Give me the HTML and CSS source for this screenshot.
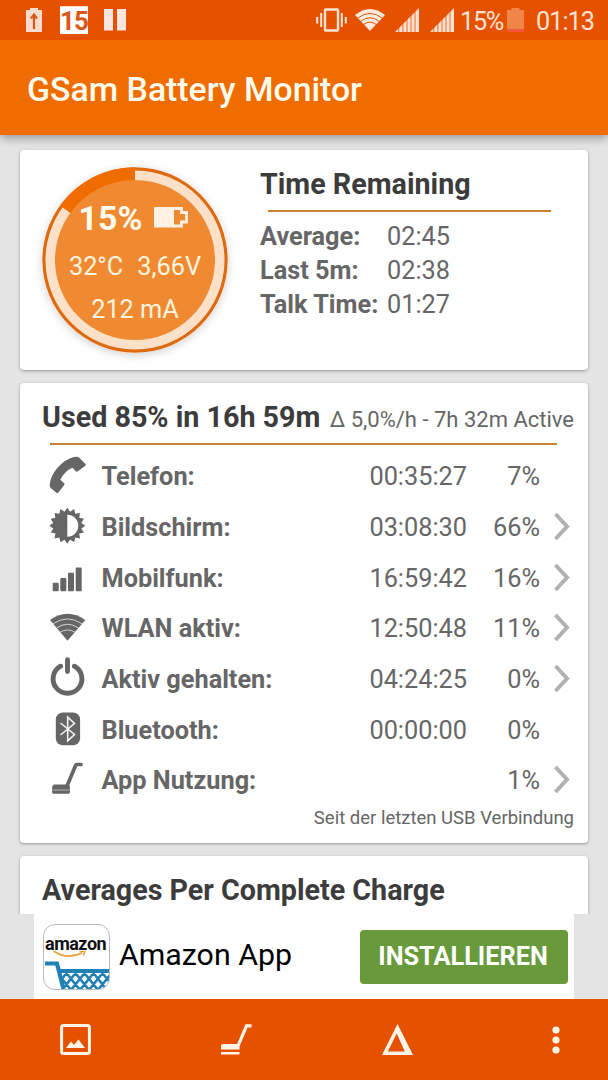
FILE: index.html
```html
<!DOCTYPE html>
<html lang="de">
<head>
<meta charset="utf-8">
<title>GSam Battery Monitor</title>
<link rel="stylesheet" href="styles.css">
</head>
<body>
<div class="screen">
  <header class="status">
    <div class="status-left">
      <svg width="16" height="24" viewBox="0 0 16 24"><path fill="#f9dccb" d="M4 0h8v2h4v22H0V2h4z"/><path d="M8 21V8M5 10.500l3-4 3 4" fill="none" stroke="#d9581a" stroke-width="2.200"/></svg>
      <span class="calendar">15</span>
      <svg width="22" height="22" viewBox="0 0 22 22"><path fill="#f8e5dd" d="M0 0h9v21.500H0zM13 0h9v21.500h-9z"/></svg>
    </div>
    <div class="status-right">
      <svg width="31" height="24" viewBox="0 0 31 24"><g fill="none" stroke="#fce5d8" stroke-width="2"><rect x="9" y="1.500" width="13" height="21" rx="1" stroke-width="2.400"/><path d="M5.200 5v14M25.800 5v14M1.200 9v6.500M29.800 9v6.500"/></g></svg>
      <svg class="st-wifi" width="30" height="24" viewBox="0 0 30 24"><path fill="#fdeade" d="M0 7Q15-5 30 7L15 23z"/><path d="M2.500 10.300Q15 .5 27.500 10.300M5.500 13.500Q15 6 24.500 13.500M8.500 16.700Q15 11.500 21.500 16.700" fill="none" stroke="#e65100" stroke-width="1"/></svg>
      <svg class="st-sig" width="24" height="24" viewBox="0 0 24 24"><path fill="#fce0d0" d="M0 24L24 0v24z"/><path d="M3.800 18v6M7.900 14v10M12 10v14M16 6v18M20 2v22" stroke="#e65100" stroke-width=".8"/></svg>
      <svg class="st-sig" width="24" height="24" viewBox="0 0 24 24"><path fill="#fce0d0" d="M0 24L24 0v24z"/><path d="M3.800 18v6M7.900 14v10M12 10v14M16 6v18M20 2v22" stroke="#e65100" stroke-width=".8"/></svg>
      <span class="st-pct">15%</span>
      <svg class="st-bat" width="17" height="24" viewBox="0 0 17 24"><path fill="#ef8548" d="M4.500 0h8v2H17v19H0V2h4.500z"/><path fill="#f4573a" d="M0 21h17v3H0z"/></svg>
      <span class="st-time">01:13</span>
    </div>
  </header>
  <div class="appbar"><h1>GSam Battery Monitor</h1></div>

  <main class="content">
    <section class="card summary">
      <div class="gauge">
        <svg class="gauge-ring" width="186" height="186" viewBox="-93 -93 186 186">
          <circle r="92.700" fill="#dd6a10"/>
          <circle r="89.500" fill="#fce1c8"/>
          <path d="M0 0V-92.700A92.700 92.700 0 0 0-75-54.500z" fill="#ef6c00"/>
          <circle r="80" fill="#f08a32"/>
        </svg>
        <div class="gauge-text">
          <div class="level"><b>15%</b><svg width="34" height="21" viewBox="0 0 34 21"><path fill="#fff1e3" d="M1 0h19v20.500H1Q0 20.500 0 19.500V1Q0 0 1 0z"/><path d="M19 1.500h8.500v4h5v9.500h-5v4H19" fill="none" stroke="#fff1e3" stroke-width="2.800"/></svg></div>
          <div class="temp"><span>32°C</span><span>3,66V</span></div>
          <div class="current">212 mA</div>
        </div>
      </div>
      <div class="remaining">
        <h2>Time Remaining</h2>
        <hr>
        <dl>
          <dt>Average:</dt><dd>02:45</dd>
          <dt>Last 5m:</dt><dd>02:38</dd>
          <dt>Talk Time:</dt><dd>01:27</dd>
        </dl>
      </div>
    </section>

    <section class="card usage">
      <div class="usage-head"><h2>Used 85% in 16h 59m</h2><span>Δ 5,0%/h - 7h 32m Active</span></div>
      <hr>
      <div class="rows">
        <div class="row">
          <svg class="ico" viewBox="0 0 40 50"><path d="M31 6.400L37.500 13Q38.200 14 37.400 14.800L29.500 20.500Q28.500 21 27.800 20.200L24.500 16.700Q17 19.500 12.300 28.700L16.200 32.300Q16.900 33.200 16.200 34L10.200 41.700Q9.300 42.500 8.400 41.800L2.700 37Q1.500 35.500 1.700 33.500Q2.500 25 9.300 17Q17.500 8 26 6.100Q29.500 5.300 31 6.400z"/></svg>
          <b>Telefon:</b><span>00:35:27</span><span>7%</span>
        </div>
        <div class="row">
          <svg class="ico" viewBox="0 0 40 50"><g transform="translate(19.300 23.700)"><path d="M18 0L14 2.800L16.600 6.900L11.900 7.900L12.700 12.700L7.900 11.900L6.900 16.600L2.800 14L0 18L-2.800 14L-6.900 16.600L-7.900 11.900L-12.700 12.700L-11.900 7.900L-16.600 6.900L-14 2.800L-18 0L-14-2.800L-16.600-6.900L-11.900-7.900L-12.700-12.700L-7.900-11.900L-6.900-16.600L-2.800-14L0-18L2.800-14L6.900-16.600L7.900-11.900L12.700-12.700L11.900-7.900L16.600-6.900L14-2.800z"/><path d="M0-11A11 11 0 0 1 0 11z" fill="#fff"/></g></svg>
          <b>Bildschirm:</b><span>03:08:30</span><span>66%</span>
          <svg class="chev" viewBox="0 0 18 50"><path d="M2.500 12L14 24.500L2.500 37"/></svg>
        </div>
        <div class="row">
          <svg class="ico" viewBox="0 0 40 50"><rect x="4.700" y="29.700" width="6" height="8.600" rx="1"/><rect x="12.300" y="25" width="6" height="13.300" rx="1"/><rect x="20" y="19.800" width="6" height="18.500" rx="1"/><rect x="27.700" y="14.400" width="6" height="23.900" rx="1"/></svg>
          <b>Mobilfunk:</b><span>16:59:42</span><span>16%</span>
          <svg class="chev" viewBox="0 0 18 50"><path d="M2.500 12L14 24.500L2.500 37"/></svg>
        </div>
        <div class="row">
          <svg class="ico" viewBox="0 0 40 50"><path d="M2 17Q19.500 4.500 37.300 17L19.500 37.800z"/><path d="M5 20.800Q19.500 11 34 20.800M8.500 25Q19.500 17.500 30.500 25M12 29.300Q19.500 24.500 27 29.300" fill="none" stroke="#d4d4d4" stroke-width="1"/></svg>
          <b>WLAN aktiv:</b><span>12:50:48</span><span>11%</span>
          <svg class="chev" viewBox="0 0 18 50"><path d="M2.500 12L14 24.500L2.500 37"/></svg>
        </div>
        <div class="row">
          <svg class="ico" viewBox="0 0 40 50"><path d="M12.600 12.200A14.400 14.400 0 1 0 26.400 12.200M19.500 5.800V17.500" fill="none" stroke="#666" stroke-width="4.900" stroke-linecap="round"/></svg>
          <b>Aktiv gehalten:</b><span>04:24:25</span><span>0%</span>
          <svg class="chev" viewBox="0 0 18 50"><path d="M2.500 12L14 24.500L2.500 37"/></svg>
        </div>
        <div class="row">
          <svg class="ico" viewBox="0 0 40 50"><rect x="7.800" y="7.500" width="24.300" height="32.700" rx="7"/><path d="M12.500 18L26.500 29.500L19.700 35.800V12.200L26.500 18.500L12.500 30" fill="none" stroke="#f4f4f4" stroke-width="1.600"/></svg>
          <b>Bluetooth:</b><span>00:00:00</span><span>0%</span>
        </div>
        <div class="row">
          <svg class="ico" viewBox="0 0 40 50"><path d="M33 9.500H29Q28 9.500 27.500 10.700L19 31" fill="none" stroke="#666" stroke-width="3.700" stroke-linecap="round"/><path d="M7 29.500H20Q22 30 22 32.500V37Q22 38.700 20.500 38.700H5.500Q4 38.700 4 37V34Q4 29.500 7 29.500z"/><path d="M4 35H22" stroke="#bbb" stroke-width=".9"/></svg>
          <b>App Nutzung:</b><span></span><span>1%</span>
          <svg class="chev" viewBox="0 0 18 50"><path d="M2.500 12L14 24.500L2.500 37"/></svg>
        </div>
      </div>
      <p class="since">Seit der letzten USB Verbindung</p>
    </section>

    <section class="card averages"><h2>Averages Per Complete Charge</h2></section>
  </main>

  <aside class="ad">
    <div class="ad-inner">
      <div class="ad-logo">
        <span>amazon</span>
        <svg width="65" height="38" viewBox="0 0 65 38">
          <path d="M9.500 0Q23 9 38 2" fill="none" stroke="#ee9c35" stroke-width="1.700"/><path d="M35.500 1L41 0L39.500 4.500" fill="none" stroke="#ee9c35" stroke-width="1.500"/>
          <clipPath id="basket"><path d="M16 18H65V38H20z"/></clipPath>
          <g clip-path="url(#basket)" fill="none" stroke="#2180b5" stroke-width="2.600"><path d="M11 19l16 20M20 19l16 20M29 19l16 20M38 19l16 20M47 19l16 20M56 19l16 20M25 19L9 39M34 19L18 39M43 19L27 39M52 19L36 39M61 19L45 39M70 19L54 39"/></g>
          <path d="M1 12.500H13L19.500 38" fill="none" stroke="#2180b5" stroke-width="4.200"/><path d="M15 20H65" stroke="#2180b5" stroke-width="4"/>
        </svg>
      </div>
      <span class="ad-name">Amazon App</span>
      <button class="install">INSTALLIEREN</button>
    </div>
  </aside>

  <nav class="toolbar">
    <svg width="31" height="31" viewBox="0 0 31 31"><rect x="1.600" y="1.600" width="27.800" height="27.800" rx="2" fill="none" stroke="#fff6e8" stroke-width="3"/><path fill="#fff6e8" d="M6 24L11 17.500L14 21L18.500 15.500L25 24z"/></svg>
    <svg width="31" height="31" viewBox="0 0 31 31"><path d="M30.500 1.800H25.500L17 22" fill="none" stroke="#fff6e8" stroke-width="3.200"/><path fill="#fff6e8" d="M2.500 20H18.500V25.500H0V22Q0 20 2.500 20zM0 28H18.500V30.500H0z"/></svg>
    <svg width="31" height="31" viewBox="0 0 31 31"><path fill="#fff6e8" fill-rule="evenodd" d="M15.500 0L31 31H0zM14.700 9.500L5.800 27.500H22.800z"/></svg>
    <svg width="8" height="28" viewBox="0 0 8 28"><g fill="#fff6e8"><circle cx="4" cy="4" r="3.600"/><circle cx="4" cy="14" r="3.600"/><circle cx="4" cy="24" r="3.600"/></g></svg>
  </nav>
</div>
</body>
</html>
```
FILE: styles.css
```css
* { box-sizing: border-box; }
body { margin: 0; font-family: Roboto, "Liberation Sans", sans-serif; color: #666; }
h1, h2, p, dl, dd { margin: 0; }
svg { display: block; flex: none; }
.screen { width: 608px; height: 1080px; display: flex; flex-direction: column; overflow: hidden; background: #e4e4e4; }

.status { height: 40px; flex: none; display: flex; justify-content: space-between; background: #e65100; padding: 0 13px 0 26px; color: #fde3d3; font-size: 25.300px; position: relative; z-index: 2; }
.status-left, .status-right { display: flex; align-items: center; }
.status-left svg { margin-top: 0; }
.calendar { width: 28px; height: 28px; margin: 0 16px 0 18px; background: #fff; border-top: 1px solid #fbd9c6; color: #d9581a; font-weight: 700; font-size: 26px; line-height: 28px; text-align: center; letter-spacing: -1px; }
.st-wifi { margin-left: 8px; }
.st-sig { margin-left: 11px; }
.st-wifi + .st-sig { margin-left: 10px; }
.st-pct { margin: 3px 5px 0 6px; width: 42px; letter-spacing: -1.300px; white-space: nowrap; }
.st-time { margin: 3px 0 0 12px; width: 59px; white-space: nowrap; letter-spacing: -1px; }

.appbar { height: 95px; flex: none; display: flex; align-items: center; padding: 4px 27px 0; background: #ef6c00; box-shadow: 0 2px 10px rgba(0,0,0,.4); position: relative; }
.appbar h1 { font-size: 33.800px; font-weight: 500; color: #fffbed; white-space: nowrap; }

.content { height: 779px; flex: none; padding: 15px 20px 0; display: flex; flex-direction: column; gap: 13px; overflow: hidden; }
.card { flex: none; background: #fff; border-radius: 4px; box-shadow: 0 1px 3px rgba(0,0,0,.35); }
h2 { font-size: 28.700px; line-height: 34px; font-weight: 700; color: #3c3c3c; white-space: nowrap; }
hr { border: 0; height: 2px; margin: 0; background: #c98132; }

.summary { height: 220px; display: flex; padding: 17px 22px; }
.gauge { display: grid; width: 186px; height: 186px; border-radius: 50%; box-shadow: 0 2px 8px rgba(0,0,0,.18); color: #fff4df; }
.gauge > * { grid-area: 1 / 1; }
.gauge-text { display: flex; flex-direction: column; align-items: center; font-size: 25.300px; }
.level { display: flex; align-items: center; gap: 12px; height: 46px; margin: 28px 3px 0 0; }
.level b { font-size: 33.800px; color: #fffbed; }
.level svg { margin-top: -2px; }
.temp { display: flex; gap: 14px; line-height: 46px; margin-top: 3px; }
.current { line-height: 42px; margin-top: -1px; }
.remaining { margin-left: 32px; }
.remaining hr { width: 283px; margin: 9px 0 8px 8px; }
dl { display: grid; grid-template-columns: 127px auto; grid-auto-rows: 34px; line-height: 34px; font-size: 25.300px; }
dt { font-weight: 700; }

.usage { height: 460px; padding: 17px 14px 0 22px; }
.usage-head { display: flex; justify-content: space-between; align-items: baseline; white-space: nowrap; font-size: 22px; }
.usage > hr { width: 507px; margin: 9px 0 6px 8px; }
.row { height: 50.670px; display: grid; grid-template-columns: 53.500px 1fr 110px 73px 34px; align-items: center; padding-left: 6px; font-size: 25.300px; }
.row b, .row span { white-space: nowrap; padding-top: 1px; }
.row span { text-align: right; }
.ico { width: 40px; height: 50px; fill: #666; }
.chev { width: 18px; height: 50px; margin-left: 13px; fill: none; stroke: #b1b1b1; stroke-width: 4; }
.since { text-align: right; font-size: 18.500px; line-height: 24px; }
.averages { height: 100px; padding: 17px 22px; }

.ad { height: 85px; flex: none; padding: 0 34px; }
.ad-inner { height: 85px; background: #fff; display: flex; align-items: center; padding: 0 6px 0 9px; }
.ad-logo { width: 67px; height: 66px; border: 1px solid #bbb; border-radius: 12px; overflow: hidden; display: flex; flex-direction: column; justify-content: flex-end; }
.ad-logo span { font-weight: 700; font-size: 18px; line-height: 20px; color: #111; letter-spacing: -.5px; margin: 0 0 -3px 1px; }
.ad-name { margin: -4px 0 0 9px; font-size: 30.300px; color: #000; white-space: nowrap; flex: 1; }
.install { width: 208px; height: 54px; border: 0; padding: 0 2px 0 0; border-radius: 4px; background: #689a3c; color: #fff; font: 700 25.300px Roboto, sans-serif; }

.toolbar { height: 81px; flex: none; background: #e65100; display: grid; grid-template-columns: 160.500px 161.500px 1fr 8px; align-items: center; padding: 0 48px 0 60px; }
```
